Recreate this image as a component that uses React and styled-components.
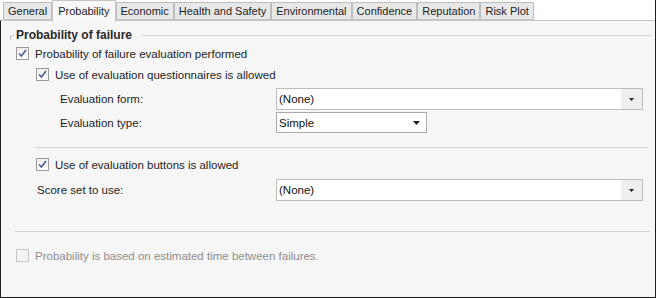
import React from 'react';
import styled, { createGlobalStyle } from 'styled-components';

const GlobalStyle = createGlobalStyle`
  html, body {
    margin: 0;
    padding: 0;
    background: #ffffff;
  }
  body {
    font-family: "Liberation Sans", Arial, sans-serif;
    font-size: 11.5px;
    color: #1e1e1e;
  }
`;

const TABS = [
  'General',
  'Probability',
  'Economic',
  'Health and Safety',
  'Environmental',
  'Confidence',
  'Reputation',
  'Risk Plot',
];

const Window = styled.div`
  width: 656px;
  height: 298px;
  display: flex;
  flex-direction: column;
  border-right: 1px solid #1c1c1c;
  box-sizing: border-box;
`;

const TabStrip = styled.div`
  display: flex;
  align-items: flex-end;
  height: 20px;
  padding-left: 3px;
  position: relative;
  z-index: 1;
`;

const Tab = styled.div`
  height: ${p => (p.$active ? '21px' : '18px')};
  margin-bottom: ${p => (p.$active ? '-1px' : '0')};
  padding: 0 ${p => (p.$active ? 5 : 4)}px;
  display: flex;
  align-items: center;
  box-sizing: border-box;
  font-size: 11px;
  color: #1e1e1e;
  background: ${p => (p.$active ? '#f7f7f7' : '#e8e8e8')};
  border: 1px solid ${p => (p.$active ? '#c4c4c4' : '#bdbdbd')};
  border-bottom: ${p => (p.$active ? 'none' : '1px solid #c4c4c4')};
  white-space: nowrap;
`;

const Panel = styled.div`
  flex: 1;
  display: flex;
  flex-direction: column;
  background: #f6f6f6;
  border-top: 1px solid #c4c4c4;
  border-left: 1px solid #1c1c1c;
  border-bottom: 1px solid #1c1c1c;
  padding: 0 4px 0 9px;
`;

const GroupHeader = styled.div`
  display: flex;
  align-items: center;
  height: 14px;
  margin-top: 7px;
  gap: 2px;

  &::before {
    content: '';
    width: 3px;
    height: 4px;
    margin-top: 4px;
    border-left: 1px solid #c8c8c8;
    border-top: 1px solid #c8c8c8;
    border-top-left-radius: 2px;
  }

  &::after {
    content: '';
    flex: 1;
    height: 1px;
    margin-left: 8px;
    background: #d2d2d2;
  }
`;

const GroupTitle = styled.span`
  font-weight: bold;
  font-size: 12px;
  color: #2a2a2a;
`;

const Row = styled.div`
  display: flex;
  align-items: center;
  height: ${p => p.$h || 21}px;
  margin-top: ${p => p.$mt || 0}px;
  padding-left: ${p => p.$indent || 0}px;
`;

const Label = styled.span`
  color: ${p => (p.$disabled ? '#8e8e8e' : '#1e1e1e')};
  white-space: nowrap;
`;

const FieldLabel = styled.span`
  width: ${p => p.$w}px;
  flex-shrink: 0;
  color: #1e1e1e;
`;

const Separator = styled.div`
  height: 1px;
  background: #d2d2d2;
  margin-top: ${p => p.$mt}px;
  margin-left: ${p => p.$indent}px;
  margin-right: ${p => p.$right}px;
`;

const Box = styled.span`
  width: 13px;
  height: 13px;
  box-sizing: border-box;
  border: 1px solid ${p => (p.$disabled ? '#c6c6c6' : '#9a9a9a')};
  background: ${p => (p.$disabled ? '#f4f4f4' : 'linear-gradient(#f0f0f0, #ffffff)')};
  margin-right: 6px;
  display: flex;
  align-items: center;
  justify-content: center;
  flex-shrink: 0;
`;

const CheckRow = styled.label`
  display: flex;
  align-items: center;
`;

function Check({ checked, disabled, children }) {
  return (
    <CheckRow>
      <Box $disabled={disabled}>
        {checked && (
          <svg width="9" height="9" viewBox="0 0 9 9">
            <path d="M1 4.5 L3.4 7 L8 1" fill="none" stroke="#4b5d95" strokeWidth="1.6" />
          </svg>
        )}
      </Box>
      <Label $disabled={disabled}>{children}</Label>
    </CheckRow>
  );
}

const Combo = styled.div`
  width: ${p => p.$w}px;
  height: ${p => p.$h}px;
  box-sizing: border-box;
  display: flex;
  align-items: stretch;
  background: #ffffff;
  border: 1px solid ${p => (p.$plain ? '#a9a9a9' : '#bcbcbc')};
`;

const ComboText = styled.span`
  flex: 1;
  display: flex;
  align-items: center;
  padding-left: 2px;
  color: #111111;
`;

const ComboButton = styled.span`
  width: ${p => (p.$plain ? 20 : 21)}px;
  display: flex;
  align-items: center;
  justify-content: center;
  background: ${p => (p.$plain ? '#ffffff' : '#efefef')};
`;

function Select({ value, width, height, plain }) {
  return (
    <Combo $w={width} $h={height} $plain={plain}>
      <ComboText>{value}</ComboText>
      <ComboButton $plain={plain}>
        {plain ? (
          <svg width="7" height="4" viewBox="0 0 7 4">
            <path d="M0 0 H7 L3.5 4 Z" fill="#222" />
          </svg>
        ) : (
          <svg width="5" height="3" viewBox="0 0 5 3">
            <path d="M0 0 H5 L2.5 3 Z" fill="#222" />
          </svg>
        )}
      </ComboButton>
    </Combo>
  );
}

export default function App() {
  return (
    <>
      <GlobalStyle />
      <Window>
        <TabStrip>
          {TABS.map(t => (
            <Tab key={t} $active={t === 'Probability'}>{t}</Tab>
          ))}
        </TabStrip>
        <Panel>
          <GroupHeader>
            <GroupTitle>Probability of failure</GroupTitle>
          </GroupHeader>
          <Row $indent={6} $mt={1}>
            <Check checked>Probability of failure evaluation performed</Check>
          </Row>
          <Row $indent={26}>
            <Check checked>Use of evaluation questionnaires is allowed</Check>
          </Row>
          <Row $indent={50} $h={22} $mt={3}>
            <FieldLabel $w={216}>Evaluation form:</FieldLabel>
            <Select value="(None)" width={367} height={22} />
          </Row>
          <Row $indent={50} $mt={2}>
            <FieldLabel $w={216}>Evaluation type:</FieldLabel>
            <Select value="Simple" width={151} height={21} plain />
          </Row>
          <Separator $mt={14} $indent={25} $right={3} />
          <Row $indent={26} $mt={6}>
            <Check checked>Use of evaluation buttons is allowed</Check>
          </Row>
          <Row $indent={27} $h={22} $mt={4}>
            <FieldLabel $w={239}>Score set to use:</FieldLabel>
            <Select value="(None)" width={367} height={22} />
          </Row>
          <Separator $mt={30} $indent={5} $right={1} />
          <Row $indent={6} $mt={13}>
            <Check disabled>Probability is based on estimated time between failures.</Check>
          </Row>
        </Panel>
      </Window>
    </>
  );
}
